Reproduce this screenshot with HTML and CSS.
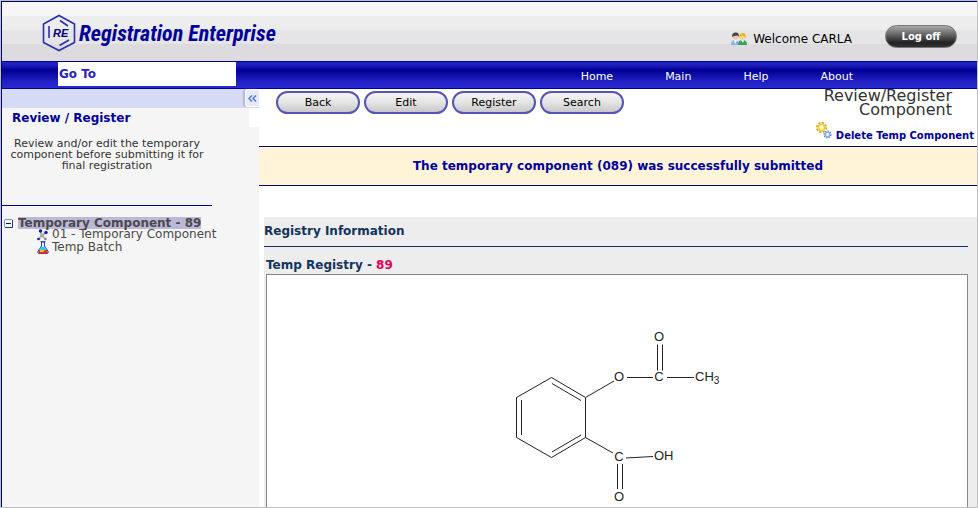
FILE: index.html
```html
<!DOCTYPE html>
<html lang="en">
<head>
<meta charset="utf-8">
<title>Registration Enterprise</title>
<link rel="stylesheet" href="styles.css">
</head>
<body>
<div class="app">
  <header class="header">
    <div class="brand">
      <svg class="brand-mark" width="34" height="38" viewBox="0 0 34 38" fill="none" stroke="#2d2db0" stroke-width="1.6">
        <path d="M17 1.500 32.500 10v18.500L17 36.500 1.500 28.500V10Z"/>
        <path d="M7 12v12M18 6.500l8 5.500M17.500 31.500l9.500-5.500"/>
        <text x="11" y="23" class="brand-re">RE</text>
      </svg>
      <span class="brand-name">Registration Enterprise</span>
    </div>
    <div class="account">
      <svg width="16" height="14" viewBox="0 0 16 14">
        <path d="M0 13q0-5 4-5t4 5Z" fill="#86b4e6"/><path d="M3 8l1 4 2-4Z" fill="#fff"/>
        <circle cx="4.500" cy="4.500" r="3" fill="#f3c9a0"/><path d="M1 5q0-5 4-4.500 3 0 3 4L6 3.500 3 4Z" fill="#444"/>
        <path d="M7 13q0-5 4.500-5t4.500 5Z" fill="#35a35c"/><path d="M10 8l2 3 1-3Z" fill="#fff"/>
        <circle cx="11.500" cy="5" r="3" fill="#f8d2a4"/><path d="M8 6q0-5 4-5 3 0 3 5l-2-2-3 0Z" fill="#f0b51c"/>
      </svg>
      <span class="welcome">Welcome CARLA</span>
      <button class="logoff" type="button">Log off</button>
    </div>
  </header>
  <nav class="nav">
    <input class="goto" type="text" value="Go To" aria-label="Go To">
    <div class="links">
      <a href="#home">Home</a><a href="#main">Main</a><a href="#help">Help</a><a href="#about">About</a>
    </div>
  </nav>
  <div class="body">
    <aside class="sidebar">
      <div class="strip">
        <button class="collapse" type="button" aria-label="Collapse panel">
          <svg width="9" height="7" viewBox="0 0 9 7" fill="none" stroke="#5a78cc" stroke-width="1.5"><path d="M4 .5 1 3.500l3 3M8 .5 5 3.500l3 3"/></svg>
        </button>
      </div>
      <div class="intro">
        <h2>Review / Register</h2>
        <p>Review and/or edit the temporary component before submitting it for final registration</p>
      </div>
      <div class="tree">
        <div class="node root">
          <svg width="9" height="9" viewBox="0 0 9 9"><rect x=".5" y=".5" width="8" height="8" rx="1" fill="#eef4fa" stroke="#6f9db8"/><path d="M1 8.500h7.500V1" fill="none" stroke="#27407c"/><path d="M2 4.500h5" stroke="#123"/></svg>
          <a href="#temp">Temporary Component - 89</a>
        </div>
        <div class="node">
          <svg width="12" height="12" viewBox="0 0 12 12"><path d="M3 2l2 4 4-2M5 6l-3 4M5 6l3 4" stroke="#aaa" stroke-width="1.500" fill="none"/><circle cx="5" cy="6.500" r="2" fill="#aaa"/><circle cx="3.500" cy="2" r="1.700" fill="#1414a0"/><circle cx="9" cy="3.500" r="1.700" fill="#1414c0"/><circle cx="1.500" cy="10" r="1.300" fill="#1414a0"/><circle cx="8.500" cy="10" r="1.300" fill="#888"/></svg>
          <a href="#c01">01 - Temporary Component</a>
        </div>
        <div class="node">
          <svg width="12" height="13" viewBox="0 0 12 13"><path d="M4.500 1v4L.8 10.500Q.5 12.500 2 12.500h8q1.500 0 1.200-2L7.500 5V1Z" fill="#dff" stroke="#2438d0"/><path d="M3.800 6h4.400l1.500 3H2Z" fill="#35c8f0"/><path d="M2 9h8l1 2.500q-.5 1-2 1H3q-1.500 0-2-1Z" fill="#f03010"/><path d="M3 9h5l-2 2H3Z" fill="#ffc020"/><path d="M3.500.7h5" stroke="#2438d0"/></svg>
          <a href="#batch">Temp Batch</a>
        </div>
      </div>
    </aside>
    <main class="main">
      <div class="toolbar">
        <div class="actions">
          <button type="button">Back</button><button type="button">Edit</button><button type="button">Register</button><button type="button">Search</button>
        </div>
        <div class="page-head">
          <h1>Review/Register<br>Component</h1>
          <a class="delete" href="#delete">
            <svg width="16" height="17" viewBox="0 0 16 17" fill="none"><circle cx="5.500" cy="5.500" r="4.500" stroke="#d8a010" stroke-width="2" stroke-dasharray="2 1.500"/><circle cx="5.500" cy="5.500" r="3.200" stroke="#f5cf3a" stroke-width="2"/><circle cx="11.500" cy="12.500" r="3.300" stroke="#4d7ec4" stroke-width="1.500" stroke-dasharray="1.500 1"/><circle cx="11.500" cy="12.500" r="2.200" stroke="#8db4e8" stroke-width="1.600"/></svg>
            <span>Delete Temp Component</span>
          </a>
        </div>
      </div>
      <p class="message" role="status">The temporary component (089) was successfully submitted</p>
      <section class="registry">
        <h2>Registry Information</h2>
        <h3>Temp Registry - <span>89</span></h3>
        <div class="structure">
          <svg width="214" height="180" viewBox="0 0 214 180" role="img" aria-label="Aspirin structure">
            <g fill="none" stroke="#222" stroke-width="1">
              <path d="M6.500 68.500 41.500 48.500 75.500 68.500V108.500L41.500 128.500 6.500 108.500Z"/>
              <path d="M11.500 71v35M42 54.500l29 17M42 123l29-17M75.500 68.500 104 52M75.500 108.500 103 124M117 48.500h26M157 48.500h27M147.500 15.500v26M152.500 15.500v26M116 129 143 127.500M107.500 135v25M112.500 135v25"/>
            </g>
            <g class="atoms">
              <text x="109" y="52">O</text><text x="149" y="12">O</text><text x="149" y="52">C</text>
              <text class="start" x="185" y="52">CH<tspan class="sub" dy="3">3</tspan></text>
              <text x="109" y="132">C</text><text class="start" x="144" y="131">OH</text><text x="109" y="172">O</text>
            </g>
          </svg>
        </div>
      </section>
    </main>
  </div>
</div>
</body>
</html>
```
FILE: styles.css
```css
* { box-sizing: border-box; }
body {
  margin: 0;
  background: #c0c0c0;
  font: 11px/11px Verdana, "DejaVu Sans", sans-serif;
  color: #333;
}
h1, h2, h3, p { margin: 0; }
a { color: inherit; text-decoration: none; }
button, input { font: inherit; }
svg { flex: none; }
.app {
  display: flex;
  flex-direction: column;
  height: calc(100vh - 2px);
  margin: 1px;
  border: solid #00007b;
  border-width: 1px 0 0 1px;
  overflow: hidden;
  background: #fff;
}
.header {
  flex: none;
  display: flex;
  justify-content: space-between;
  align-items: center;
  height: 59px;
  padding: 4px 20px 0 40px;
  background: linear-gradient(#f6f6f6 14px, #ededee 14px 28px, #e5e4e6 28px 42px, #dddbde 42px);
}
.brand { display: flex; align-items: center; gap: 3px; }
.brand-mark { margin-top: -2px; }
.brand-re { font: italic bold 11px "Liberation Sans", sans-serif; fill: #000080; stroke: none; }
.brand-name {
  font: italic bold 22px/28px "Roboto Condensed", "DejaVu Sans Condensed", "Liberation Sans", sans-serif;
  color: #00009b;
}
.account { display: flex; align-items: center; padding-top: 10px; }
.welcome { margin: 0 33px 0 6px; font-size: 12px; line-height: 16px; color: #000; }
.logoff {
  width: 72px;
  height: 23px;
  margin-bottom: 4px;
  padding: 0;
  border: 1px solid #777;
  border-radius: 12px;
  background: linear-gradient(#aaa, #666 40%, #222 80%, #333);
  color: #fff;
  font-size: 10px;
  font-weight: bold;
}
.nav {
  flex: none;
  display: flex;
  align-items: flex-start;
  height: 28px;
  border: solid #00008c;
  border-width: 1px 0;
  background: linear-gradient(#2020c0 0 3px, #1212a8 5px, #000098 8px, #1010a8 14px, #2020c4 19px, #2929d2);
}
.goto {
  width: 178px;
  height: 24px;
  margin-left: 56px;
  padding: 0 1px;
  border: 0;
  background: #fff;
  color: #2525bd;
  font-size: 12px;
  font-weight: bold;
}
.links { display: flex; gap: 52px; margin: 7px 124px 0 auto; line-height: 16px; color: #fff; }
.body { flex: 1; display: flex; min-height: 0; }
.sidebar { flex: none; width: 257px; background: #f5f5f5; }
.strip { position: relative; height: 19px; background: #d6daf5; }
.strip::after { content: ""; position: absolute; top: 19px; right: 0; width: 10px; height: 19px; background: #fff; }
.collapse {
  display: flex;
  align-items: center;
  justify-content: center;
  width: 14px;
  height: 18px;
  margin-left: auto;
  padding: 0;
  border: 1px solid #fff;
  border-right: 0;
  border-radius: 3px 0 0 3px;
  background: #e6eafa;
  box-shadow: -2px 0 1px #b4b8d0;
}
.intro { width: 210px; height: 98px; border-bottom: 1px solid #00008c; }
.intro h2 { padding: 4px 10px 14px; font-size: 12px; line-height: 12px; color: #00009b; }
.intro p { text-align: center; }
.tree { padding: 12px 0 0 2px; color: #4a4a4a; font-size: 12px; white-space: nowrap; }
.node { display: flex; align-items: center; gap: 3px; height: 13px; padding-left: 33px; }
.root { height: 10px; gap: 5px; padding: 0; font-weight: bold; }
.root a { line-height: 12px; background: #bdb8d8; }
.main { flex: 1; min-width: 0; display: flex; flex-direction: column; }
.toolbar { flex: none; display: flex; justify-content: space-between; height: 57px; }
.actions { display: flex; gap: 4px; padding: 2px 0 0 17px; }
.actions button {
  width: 84px;
  height: 23px;
  padding: 0;
  border: 2px solid #5555b5;
  border-radius: 12px;
  background: linear-gradient(#f4f4f4, #e4e4e4 50%, #c8c8c8);
  color: #000;
}
.page-head { padding-right: 3px; text-align: right; }
h1 { padding: 0 22px 0 0; font-size: 16px; line-height: 14px; font-weight: normal; }
.delete { display: flex; gap: 4px; justify-content: flex-end; margin-top: 5px; font-size: 10px; line-height: 12px; font-weight: bold; color: #00009b; }
.delete span { padding-top: 8px; }
.message {
  flex: none;
  padding: 13px 0;
  border: solid #00006b;
  border-width: 1px 0;
  background: #fff4d8;
  color: #00009b;
  font-size: 12px;
  line-height: 12px;
  font-weight: bold;
  text-align: center;
}
.registry {
  flex: 1;
  display: flex;
  flex-direction: column;
  min-height: 0;
  margin: 31px 0 0 5px;
  padding-right: 9px;
  background: #ededed;
  color: #12335c;
}
.registry h2 { padding: 8px 0 9px; border-bottom: 1px solid #12335c; font-size: 12px; line-height: 12px; }
.registry h3 { padding: 12px 0 2px 2px; font-size: 12px; line-height: 13px; }
.registry h3 span { color: #e0005a; }
.structure {
  flex: 1;
  margin-left: 2px;
  padding: 54px 0 0;
  border: 1px solid #888;
  border-bottom: 0;
  background: #fff;
  text-align: center;
}
.atoms { font: 13px "Liberation Sans", Arial, sans-serif; fill: #222; text-anchor: middle; }
.start { text-anchor: start; }
.sub { font-size: 10px; }
```
